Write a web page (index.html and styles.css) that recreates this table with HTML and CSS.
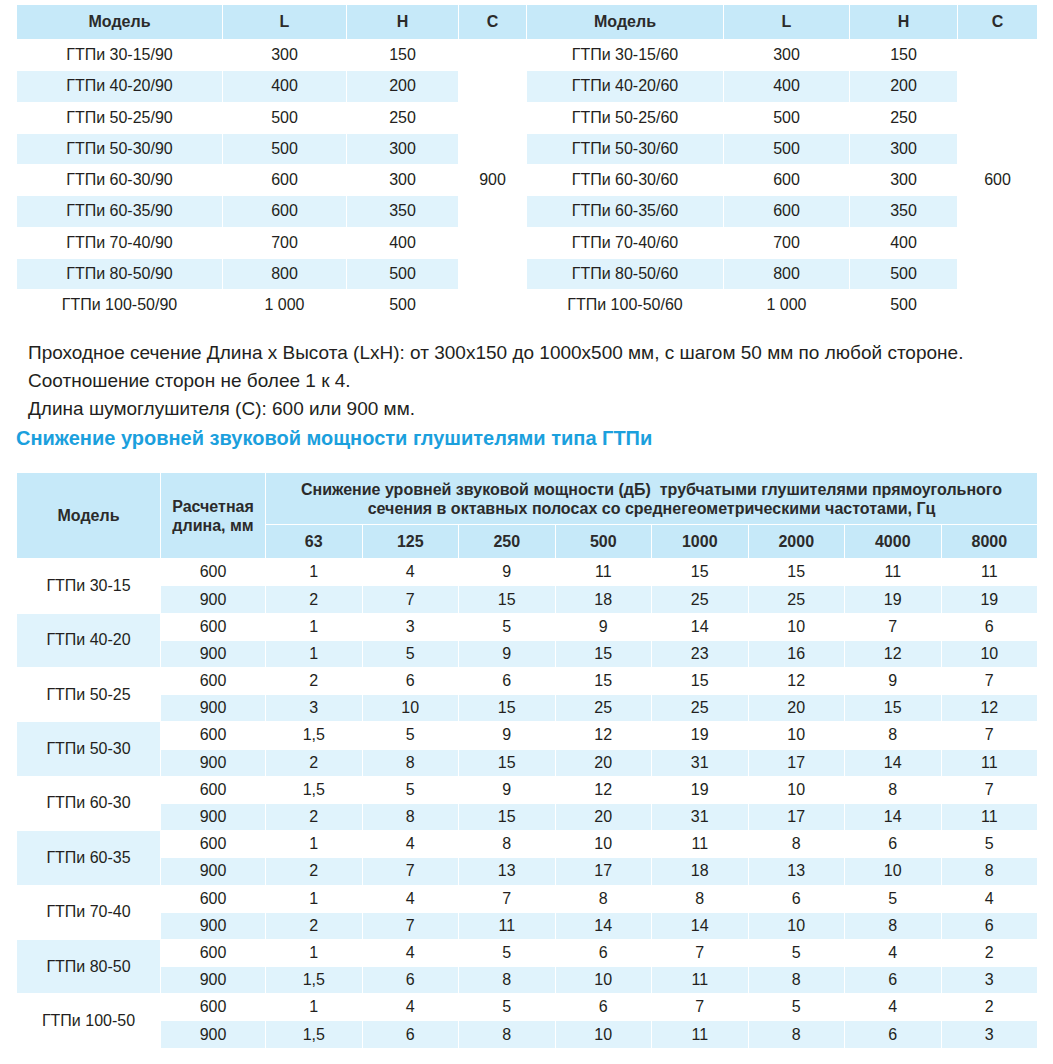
FILE: index.html
```html
<!DOCTYPE html>
<html lang="ru">
<head>
  <meta charset="UTF-8" />
  <meta name="viewport" content="width=device-width, initial-scale=1.0"/>
  <title>ГТПи - размеры и снижение уровней звуковой мощности</title>
  <link rel="stylesheet" href="styles.css">
</head>
<body>
  <table class="sizes">
    <colgroup>
      <col class="c-model1"><col class="c-l1"><col class="c-h1"><col class="c-c1">
      <col class="c-model2"><col class="c-l2"><col class="c-h2"><col class="c-c2">
    </colgroup>
    <thead>
      <tr>
        <th>Модель</th><th>L</th><th>H</th><th>C</th>
        <th>Модель</th><th>L</th><th>H</th><th>C</th>
      </tr>
    </thead>
    <tbody>
      <tr>
        <td>ГТПи 30-15/90</td><td>300</td><td>150</td><td class="len" rowspan="9">900</td>
        <td>ГТПи 30-15/60</td><td>300</td><td>150</td><td class="len" rowspan="9">600</td>
      </tr>
      <tr class="alt">
        <td>ГТПи 40-20/90</td><td>400</td><td>200</td>
        <td>ГТПи 40-20/60</td><td>400</td><td>200</td>
      </tr>
      <tr>
        <td>ГТПи 50-25/90</td><td>500</td><td>250</td>
        <td>ГТПи 50-25/60</td><td>500</td><td>250</td>
      </tr>
      <tr class="alt">
        <td>ГТПи 50-30/90</td><td>500</td><td>300</td>
        <td>ГТПи 50-30/60</td><td>500</td><td>300</td>
      </tr>
      <tr>
        <td>ГТПи 60-30/90</td><td>600</td><td>300</td>
        <td>ГТПи 60-30/60</td><td>600</td><td>300</td>
      </tr>
      <tr class="alt">
        <td>ГТПи 60-35/90</td><td>600</td><td>350</td>
        <td>ГТПи 60-35/60</td><td>600</td><td>350</td>
      </tr>
      <tr>
        <td>ГТПи 70-40/90</td><td>700</td><td>400</td>
        <td>ГТПи 70-40/60</td><td>700</td><td>400</td>
      </tr>
      <tr class="alt">
        <td>ГТПи 80-50/90</td><td>800</td><td>500</td>
        <td>ГТПи 80-50/60</td><td>800</td><td>500</td>
      </tr>
      <tr>
        <td>ГТПи 100-50/90</td><td>1 000</td><td>500</td>
        <td>ГТПи 100-50/60</td><td>1 000</td><td>500</td>
      </tr>
    </tbody>
  </table>

  <div class="notes">
    <p>Проходное сечение Длина х Высота (LxH): от 300х150 до 1000х500 мм, с шагом 50 мм по любой стороне.</p>
    <p>Соотношение сторон не более 1 к 4.</p>
    <p>Длина шумоглушителя (С): 600 или 900 мм.</p>
  </div>

  <h2 class="section-title">Снижение уровней звуковой мощности глушителями типа ГТПи</h2>

  <table class="noise">
    <colgroup>
      <col class="c-model"><col class="c-len">
      <col class="c-f"><col class="c-f"><col class="c-f"><col class="c-f">
      <col class="c-f"><col class="c-f"><col class="c-f"><col class="c-f">
    </colgroup>
    <thead>
      <tr class="head-top">
        <th rowspan="2">Модель</th>
        <th rowspan="2">Расчетная<br>длина, мм</th>
        <th colspan="8">Снижение уровней звуковой мощности (дБ)&nbsp; трубчатыми глушителями прямоугольного<br>сечения в октавных полосах со среднегеометрическими частотами, Гц</th>
      </tr>
      <tr class="head-freq">
        <th>63</th><th>125</th><th>250</th><th>500</th><th>1000</th><th>2000</th><th>4000</th><th>8000</th>
      </tr>
    </thead>
    <tbody>
      <tr><td class="model" rowspan="2">ГТПи 30-15</td><td>600</td><td>1</td><td>4</td><td>9</td><td>11</td><td>15</td><td>15</td><td>11</td><td>11</td></tr>
      <tr class="alt"><td>900</td><td>2</td><td>7</td><td>15</td><td>18</td><td>25</td><td>25</td><td>19</td><td>19</td></tr>

      <tr><td class="model shaded" rowspan="2">ГТПи 40-20</td><td>600</td><td>1</td><td>3</td><td>5</td><td>9</td><td>14</td><td>10</td><td>7</td><td>6</td></tr>
      <tr class="alt"><td>900</td><td>1</td><td>5</td><td>9</td><td>15</td><td>23</td><td>16</td><td>12</td><td>10</td></tr>

      <tr><td class="model" rowspan="2">ГТПи 50-25</td><td>600</td><td>2</td><td>6</td><td>6</td><td>15</td><td>15</td><td>12</td><td>9</td><td>7</td></tr>
      <tr class="alt"><td>900</td><td>3</td><td>10</td><td>15</td><td>25</td><td>25</td><td>20</td><td>15</td><td>12</td></tr>

      <tr><td class="model shaded" rowspan="2">ГТПи 50-30</td><td>600</td><td>1,5</td><td>5</td><td>9</td><td>12</td><td>19</td><td>10</td><td>8</td><td>7</td></tr>
      <tr class="alt"><td>900</td><td>2</td><td>8</td><td>15</td><td>20</td><td>31</td><td>17</td><td>14</td><td>11</td></tr>

      <tr><td class="model" rowspan="2">ГТПи 60-30</td><td>600</td><td>1,5</td><td>5</td><td>9</td><td>12</td><td>19</td><td>10</td><td>8</td><td>7</td></tr>
      <tr class="alt"><td>900</td><td>2</td><td>8</td><td>15</td><td>20</td><td>31</td><td>17</td><td>14</td><td>11</td></tr>

      <tr><td class="model shaded" rowspan="2">ГТПи 60-35</td><td>600</td><td>1</td><td>4</td><td>8</td><td>10</td><td>11</td><td>8</td><td>6</td><td>5</td></tr>
      <tr class="alt"><td>900</td><td>2</td><td>7</td><td>13</td><td>17</td><td>18</td><td>13</td><td>10</td><td>8</td></tr>

      <tr><td class="model" rowspan="2">ГТПи 70-40</td><td>600</td><td>1</td><td>4</td><td>7</td><td>8</td><td>8</td><td>6</td><td>5</td><td>4</td></tr>
      <tr class="alt"><td>900</td><td>2</td><td>7</td><td>11</td><td>14</td><td>14</td><td>10</td><td>8</td><td>6</td></tr>

      <tr><td class="model shaded" rowspan="2">ГТПи 80-50</td><td>600</td><td>1</td><td>4</td><td>5</td><td>6</td><td>7</td><td>5</td><td>4</td><td>2</td></tr>
      <tr class="alt"><td>900</td><td>1,5</td><td>6</td><td>8</td><td>10</td><td>11</td><td>8</td><td>6</td><td>3</td></tr>

      <tr><td class="model" rowspan="2">ГТПи 100-50</td><td>600</td><td>1</td><td>4</td><td>5</td><td>6</td><td>7</td><td>5</td><td>4</td><td>2</td></tr>
      <tr class="alt"><td>900</td><td>1,5</td><td>6</td><td>8</td><td>10</td><td>11</td><td>8</td><td>6</td><td>3</td></tr>
    </tbody>
  </table>
</body>
</html>
```

FILE: styles.css
```css
* {
  margin: 0;
  padding: 0;
  box-sizing: border-box;
}

body {
  font-family: "Liberation Sans", Arial, sans-serif;
  color: #231f20;
  background-color: #fff;
  padding: 4px 16px 0;
}

table {
  width: 1021px;
  table-layout: fixed;
  border-collapse: collapse;
  font-size: 16px;
}

th, td {
  border: 1px solid #fff;
  text-align: center;
  vertical-align: middle;
  font-weight: normal;
}

th {
  background-color: #c6e9f9;
  font-weight: bold;
  color: #2b2b2b;
}

tr.alt td {
  background-color: #e0f3fc;
}

/* верхняя таблица размеров */
.c-model1 { width: 206px; }
.c-l1 { width: 124px; }
.c-h1 { width: 112px; }
.c-c1 { width: 68px; }
.c-model2 { width: 197px; }
.c-l2 { width: 126px; }
.c-h2 { width: 108px; }
.c-c2 { width: 80px; }

.sizes th {
  height: 35px;
}

.sizes td {
  height: 31.25px;
}

.sizes td.len {
  background-color: #fff;
}

/* примечания */
.notes {
  padding: 18px 0 0 12px;
  font-size: 19px;
  line-height: 28px;
}

.section-title {
  font-size: 20px;
  font-weight: bold;
  color: #1ba0dd;
  line-height: 30px;
  margin-bottom: 19px;
}

/* таблица снижения уровней */
.c-model { width: 144px; }
.c-len { width: 105px; }
.c-f { width: 96.5px; }

.noise .head-top th {
  height: 52px;
  line-height: 19px;
}

.noise .head-freq th {
  height: 34px;
}

.noise td {
  height: 27.2px;
}

.noise td.model {
  background-color: #fff;
}

.noise td.model.shaded {
  background-color: #e0f3fc;
}
```
